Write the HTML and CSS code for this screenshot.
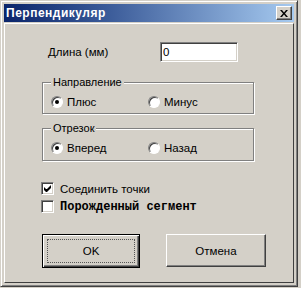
FILE: index.html
```html
<!DOCTYPE html>
<html lang="ru">
<head>
    <meta charset="UTF-8">
    <title>Перпендикуляр</title>
    <link rel="stylesheet" href="styles.css">
</head>
<body>
    <div class="window">
        <div class="title-bar">
            <span class="title">Перпендикуляр</span>
            <button class="close-btn" aria-label="Закрыть">
                <svg width="8" height="7" viewBox="0 0 8 7">
                    <path d="M0 0h2l2 2.5 2-2.5h2l-3 3.5 3 3.5h-2l-2-2.5-2 2.5h-2l3-3.5z" fill="#000"/>
                </svg>
            </button>
        </div>
        <div class="client">
            <div class="field-row">
                <label class="field-label" for="length">Длина (мм)</label>
                <input id="length" class="text-input" type="text" value="0">
            </div>

            <fieldset class="group group-first">
                <legend>Направление</legend>
                <div class="options">
                    <span class="option"><span class="radio checked"></span>Плюс</span>
                    <span class="option"><span class="radio"></span>Минус</span>
                </div>
            </fieldset>

            <fieldset class="group group-second">
                <legend>Отрезок</legend>
                <div class="options">
                    <span class="option"><span class="radio checked"></span>Вперед</span>
                    <span class="option"><span class="radio"></span>Назад</span>
                </div>
            </fieldset>

            <div class="check-row check-first">
                <span class="checkbox">
                    <svg width="7" height="7" viewBox="0 0 7 7">
                        <path d="M0 2v3l2 2h1l4-4v-3l-4 4h-1z" fill="#000"/>
                    </svg>
                </span>
                <span class="check-label">Соединить точки</span>
            </div>
            <div class="check-row check-second">
                <span class="checkbox"></span>
                <span class="check-label mono">Порожденный сегмент</span>
            </div>

            <div class="buttons">
                <button class="btn btn-default"><span class="focus">OK</span></button>
                <button class="btn btn-cancel">Отмена</button>
            </div>
        </div>
    </div>
</body>
</html>
```

FILE: styles.css
```css
html, body {
    margin: 0;
    padding: 0;
    background-color: #d4d0c8;
    font-family: "Liberation Sans", Arial, sans-serif;
    font-size: 11px;
    color: #000;
}

.window {
    width: 298px;
    height: 287px;
    box-sizing: border-box;
    border: 1px solid;
    border-color: #d4d0c8 #404040 #404040 #d4d0c8;
    box-shadow: inset 1px 1px 0 #fff, inset -1px -1px 0 #808080;
    padding: 3px;
    display: flex;
    flex-direction: column;
    background-color: #d4d0c8;
}

.title-bar {
    height: 18px;
    display: flex;
    align-items: center;
    justify-content: space-between;
    padding: 0 2px 0 2px;
    background: linear-gradient(to right, #0a246a, #3a5a98 35%, #a6caf0);
}

.title {
    color: #fff;
    font-weight: bold;
    font-size: 12px;
    letter-spacing: 0.5px;
}

.close-btn {
    width: 16px;
    height: 14px;
    padding: 0;
    margin: 0;
    display: flex;
    align-items: center;
    justify-content: center;
    background-color: #d4d0c8;
    border: 1px solid;
    border-color: #fff #404040 #404040 #fff;
    box-shadow: inset -1px -1px 0 #808080;
}

.client {
    flex: 1;
    margin-top: 1px;
    border: 1px solid;
    border-color: #fff #404040 #404040 #fff;
}

.field-row {
    display: flex;
    align-items: center;
    margin-top: 18px;
    padding-left: 43px;
}

.field-label {
    width: 112px;
    font-size: 11.5px;
}

.text-input {
    width: 78px;
    height: 20px;
    box-sizing: border-box;
    margin: 0;
    padding: 0 2px;
    border: 1px solid;
    border-color: #808080 #fff #fff #808080;
    box-shadow: inset 1px 1px 0 #404040, inset -1px -1px 0 #d4d0c8;
    background-color: #fff;
    font-family: "Liberation Sans", Arial, sans-serif;
    font-size: 11.5px;
    outline: none;
}

.group {
    width: 210px;
    box-sizing: border-box;
    margin: 0 0 0 37px;
    padding: 0 8px;
    border: 1px solid #808080;
    box-shadow: inset 1px 1px 0 #fff, 1px 1px 0 #fff;
}

.group legend {
    padding: 0 2px;
    line-height: 13px;
    background-color: #d4d0c8;
    position: relative;
}

.group-first {
    margin-top: 14px;
}

.group-first .options {
    padding-top: 2px;
    height: 22px;
}

.group-second {
    margin-top: 8px;
}

.group-second .options {
    padding: 2px 0 1px;
    height: 22px;
}

.options {
    display: flex;
    align-items: center;
}

.option {
    width: 97px;
    display: flex;
    align-items: center;
    gap: 4px;
    font-size: 11.5px;
}

.radio {
    width: 12px;
    height: 12px;
    box-sizing: border-box;
    border-radius: 50%;
    border: 1px solid;
    border-color: #808080 #fff #fff #808080;
    box-shadow: inset 1px 1px 0 #404040;
    background-color: #fff;
    display: flex;
    align-items: center;
    justify-content: center;
}

.radio.checked::after {
    content: "";
    width: 4px;
    height: 4px;
    border-radius: 50%;
    background-color: #000;
}

.check-row {
    display: flex;
    align-items: center;
    gap: 6px;
    margin-left: 36px;
    height: 13px;
}

.check-first {
    margin-top: 21px;
}

.check-second {
    margin-top: 5px;
}

.checkbox {
    width: 13px;
    height: 13px;
    box-sizing: border-box;
    border: 1px solid;
    border-color: #808080 #fff #fff #808080;
    box-shadow: inset 1px 1px 0 #404040, inset -1px -1px 0 #d4d0c8;
    background-color: #fff;
    display: flex;
    align-items: center;
    justify-content: center;
}

.check-label {
    font-size: 11.5px;
}

.mono {
    font-family: "Liberation Mono", "Courier New", monospace;
    font-weight: bold;
    font-size: 12px;
}

.buttons {
    display: flex;
    align-items: flex-start;
    margin-top: 21px;
    margin-left: 37px;
    gap: 26px;
}

.btn {
    margin: 0;
    padding: 0;
    background-color: #d4d0c8;
    font-family: "Liberation Sans", Arial, sans-serif;
    font-size: 11.5px;
    color: #000;
    display: flex;
    align-items: center;
    justify-content: center;
    box-sizing: border-box;
}

.btn-default {
    width: 98px;
    height: 34px;
    border: 1px solid #000;
    box-shadow: inset 1px 1px 0 #fff, inset -1px -1px 0 #404040, inset -2px -2px 0 #808080;
    padding: 3px;
}

.btn-default .focus {
    flex: 1;
    align-self: stretch;
    display: flex;
    align-items: center;
    justify-content: center;
    border: 1px dotted #555;
    margin: 1px;
}

.btn-cancel {
    width: 100px;
    height: 33px;
    border: 1px solid;
    border-color: #fff #404040 #404040 #fff;
    box-shadow: inset -1px -1px 0 #808080;
}
```
